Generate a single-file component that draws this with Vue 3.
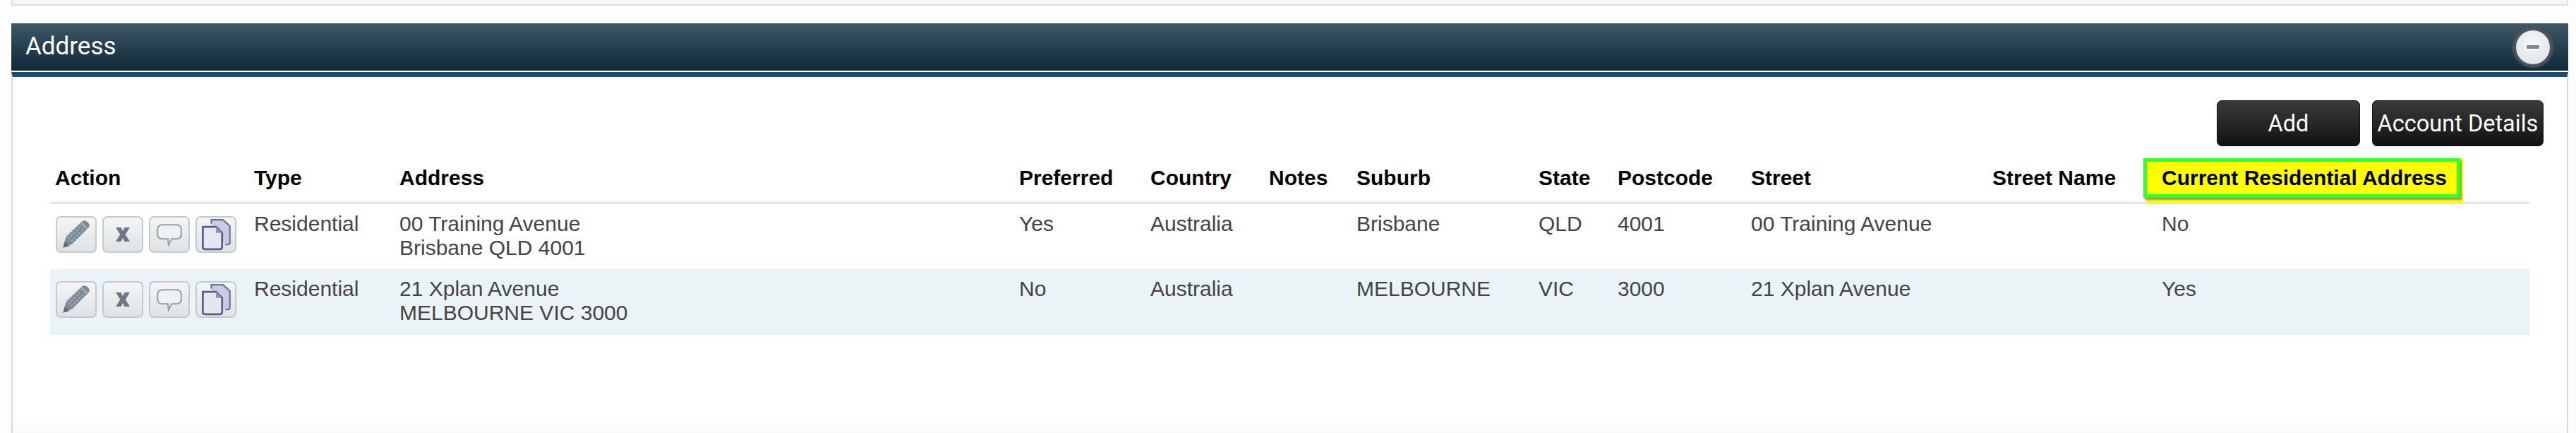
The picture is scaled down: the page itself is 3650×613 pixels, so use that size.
<script setup>
const columns = [
  { label: 'Action', width: 282 },
  { label: 'Type', width: 206 },
  { label: 'Address', width: 878 },
  { label: 'Preferred', width: 186 },
  { label: 'Country', width: 168 },
  { label: 'Notes', width: 124 },
  { label: 'Suburb', width: 258 },
  { label: 'State', width: 112 },
  { label: 'Postcode', width: 189 },
  { label: 'Street', width: 342 },
  { label: 'Street Name', width: 240 },
  { label: 'Current Residential Address', width: 528, marked: true },
]

const rows = [
  {
    type: 'Residential',
    address: ['00 Training Avenue', 'Brisbane QLD 4001'],
    preferred: 'Yes',
    country: 'Australia',
    notes: '',
    suburb: 'Brisbane',
    state: 'QLD',
    postcode: '4001',
    street: '00 Training Avenue',
    streetName: '',
    current: 'No',
  },
  {
    type: 'Residential',
    address: ['21 Xplan Avenue', 'MELBOURNE VIC 3000'],
    preferred: 'No',
    country: 'Australia',
    notes: '',
    suburb: 'MELBOURNE',
    state: 'VIC',
    postcode: '3000',
    street: '21 Xplan Avenue',
    streetName: '',
    current: 'Yes',
  },
]
</script>

<template>
  <div class="page">
    <div class="top-band"></div>

    <section class="panel">
      <header class="panel-head">
        <h2>Address</h2>
        <button type="button" class="collapse" title="Collapse"><span></span></button>
      </header>

      <div class="panel-body">
        <div class="toolbar">
          <button type="button" class="btn btn-add">Add</button>
          <button type="button" class="btn btn-details">Account Details</button>
        </div>

        <table class="grid">
          <colgroup>
            <col v-for="col in columns" :key="col.label" :style="{ width: col.width + 'px' }" />
          </colgroup>
          <thead>
            <tr>
              <th v-for="col in columns" :key="col.label" :class="{ marked: col.marked }">
                <span v-if="col.marked" class="mark-fill"></span>
                <span v-if="col.marked" class="mark-box"></span>
                <span class="th-label">{{ col.label }}</span>
              </th>
            </tr>
          </thead>
          <tbody>
            <tr v-for="(row, i) in rows" :key="i" :class="{ alt: i % 2 === 1 }">
              <td>
                <div class="actions">
                  <button type="button" class="icon-btn" title="Edit">
                    <svg width="40" height="40" viewBox="4 4 31 31">
                      <path d="M5 34 L8 23 L26 5 Q29 3 32 6 L33 7 Q35 10 33 12 L15 30 Z" fill="#7d8b96" />
                      <path d="M11 24 L27 8 M14 27 L30 11 M9 21 L24 7" stroke="#a4aeb6" stroke-width="1.5" fill="none" stroke-dasharray="2 2" />
                      <path d="M25 6 L32 13" stroke="#a9b2b9" stroke-width="1.5" />
                      <path d="M5 34 L7 27 L12 32 Z" fill="#5f6d78" />
                    </svg>
                  </button>
                  <button type="button" class="icon-btn" title="Delete">
                    <svg width="30" height="30" viewBox="0 0 24 24">
                      <path d="M4 4 H10 L12 8 L14 4 H20 L15 12 L20 20 H14 L12 16 L10 20 H4 L9 12 Z" fill="#6c7883" />
                    </svg>
                  </button>
                  <button type="button" class="icon-btn" title="Comment">
                    <svg width="40" height="40" viewBox="0 0 38 38">
                      <path d="M10 6 H28 Q35 6 35 13 V18 Q35 25 28 25 H22 L18 33 L17 25 H10 Q3 25 3 18 V13 Q3 6 10 6 Z" fill="#eef1f1" stroke="#94a3a3" stroke-width="2" />
                    </svg>
                  </button>
                  <button type="button" class="icon-btn" title="Copy">
                    <svg width="46" height="46" viewBox="2 2 40 42">
                      <path d="M16 9 V4 H31 L40 12 V33 Q40 36 37 36 H34" fill="#c9cce0" stroke="#6b7299" stroke-width="2" />
                      <path d="M5 13 H22 L30 21 V39 Q30 42 27 42 H8 Q5 42 5 39 Z" fill="#e4e6f0" stroke="#565e8c" stroke-width="2.5" />
                      <path d="M22 13 V21 H30 Z" fill="#8d93b8" />
                    </svg>
                  </button>
                </div>
              </td>
              <td>{{ row.type }}</td>
              <td>
                <div v-for="line in row.address" :key="line">{{ line }}</div>
              </td>
              <td>{{ row.preferred }}</td>
              <td>{{ row.country }}</td>
              <td>{{ row.notes }}</td>
              <td>{{ row.suburb }}</td>
              <td>{{ row.state }}</td>
              <td>{{ row.postcode }}</td>
              <td>{{ row.street }}</td>
              <td>{{ row.streetName }}</td>
              <td>{{ row.current }}</td>
            </tr>
          </tbody>
        </table>
      </div>
    </section>
  </div>
</template>

<style>
html,
body {
  background: #fdfdfd;
}
</style>

<style scoped>
.page {
  height: 613px;
  padding: 0 11px 0 16px;
  box-sizing: border-box;
  font-family: 'Liberation Sans', Arial, sans-serif;
  overflow: hidden;
}

.top-band {
  height: 6px;
  background: #f4f5f7;
  border: 2px solid #dfdfdf;
  border-top: 0;
}

.panel {
  margin-top: 25px;
  background: #fff;
}

.panel-head {
  height: 67px;
  margin-bottom: 2px;
  display: flex;
  align-items: center;
  justify-content: space-between;
  padding: 0 26px 0 20px;
  background: linear-gradient(to bottom, #3f5866, #0f283a);
}

h2 {
  margin: 0 0 3px;
  font: 400 35px 'Roboto', sans-serif;
  color: #fff;
}

.collapse {
  width: 48px;
  height: 48px;
  padding: 0;
  border: 0;
  border-radius: 50%;
  background: radial-gradient(circle at 50% 35%, #f5f7f9, #dcdfe3);
  box-shadow: 0 0 3px 5px #4d545b;
  display: flex;
  align-items: center;
  justify-content: center;
}

.collapse span {
  width: 18px;
  height: 5px;
  background: #7a8796;
  box-shadow: 0 0 0 2px #fbfcfd;
}

.panel-body {
  height: 511px;
  box-sizing: border-box;
  background: linear-gradient(to bottom, #fff 478px, #f9f9f9 504px);
  border-top: 7px solid #1f4a6e;
  border-left: 2px solid #d9d9d9;
  border-right: 2px solid #d9d9d9;
  padding: 33px 0 0 53px;
}

.toolbar {
  display: flex;
  justify-content: flex-end;
  gap: 17px;
  padding-right: 33px;
}

.btn {
  height: 65px;
  background: linear-gradient(to bottom, #3b3b3b, #111);
  border: 1px solid #111;
  border-radius: 7px;
  color: #fff;
  font: 400 32.5px 'Roboto', sans-serif;
  padding: 0;
}

.btn-add {
  width: 203px;
}

.btn-details {
  width: 243px;
}

.grid {
  table-layout: fixed;
  width: 3513px;
  border-collapse: collapse;
  margin-top: 17px;
  font-size: 30px;
  color: #444;
}

th {
  height: 55px;
  padding: 0 0 7px 7px;
  text-align: left;
  color: #000;
  font-weight: 700;
  border-bottom: 3px solid #e4e4e4;
  white-space: nowrap;
  position: relative;
}

.th-label {
  position: relative;
}

.mark-fill {
  position: absolute;
  left: -15px;
  top: 0;
  width: 449px;
  height: 63px;
  background: #ff0;
}

.mark-box {
  position: absolute;
  left: -19px;
  top: 0;
  width: 449px;
  height: 56px;
  box-sizing: border-box;
  border: 5px solid #33ff33;
  box-shadow: 2px 3px 2px #9c9c3c;
}

td {
  height: 93px;
  padding: 11px 0 0 7px;
  box-sizing: border-box;
  vertical-align: top;
  line-height: 34px;
  white-space: nowrap;
}

tr.alt td {
  background: #eaf3f6;
}

.actions {
  display: flex;
  gap: 8px;
  margin: 6px 0 0 1px;
}

.icon-btn {
  width: 58px;
  height: 52px;
  padding: 0;
  border: 2px solid #c3c9cf;
  border-radius: 7px;
  background: linear-gradient(to bottom, #f3f5f6, #dfe2e4);
  display: flex;
  align-items: center;
  justify-content: center;
  box-sizing: border-box;
  overflow: hidden;
}
</style>
